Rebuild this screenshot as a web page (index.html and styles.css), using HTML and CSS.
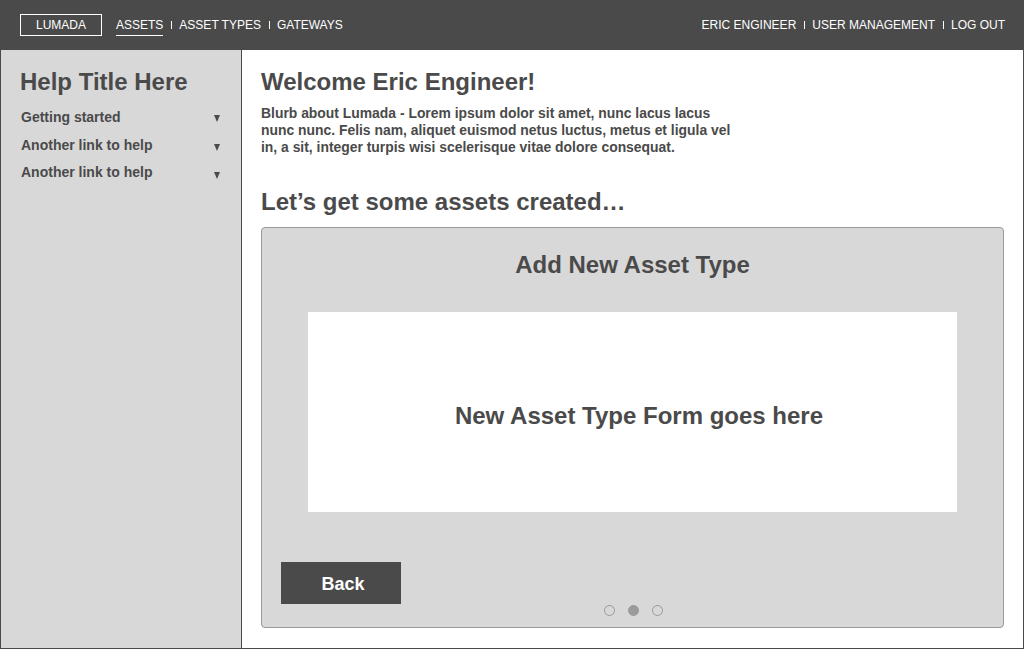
FILE: index.html
```html
<!DOCTYPE html>
<html>
<head>
<meta charset="utf-8">
<link rel="stylesheet" href="styles.css">
</head>
<body>
<div class="app">
  <header class="topbar">
    <div class="brand">LUMADA</div>
    <nav class="nav">
      <a class="nav-link active">ASSETS</a>
      <span class="sep"></span>
      <a class="nav-link">ASSET TYPES</a>
      <span class="sep"></span>
      <a class="nav-link">GATEWAYS</a>
    </nav>
    <nav class="nav nav-right">
      <a class="nav-link">ERIC ENGINEER</a>
      <span class="sep"></span>
      <a class="nav-link">USER MANAGEMENT</a>
      <span class="sep"></span>
      <a class="nav-link">LOG OUT</a>
    </nav>
  </header>
  <div class="body">
    <aside class="sidebar">
      <h2 class="help-title">Help Title Here</h2>
      <ul class="help-list">
        <li class="help-item"><span>Getting started</span><i class="caret"></i></li>
        <li class="help-item"><span>Another link to help</span><i class="caret low"></i></li>
        <li class="help-item"><span>Another link to help</span><i class="caret low"></i></li>
      </ul>
    </aside>
    <main class="content">
      <h1 class="welcome">Welcome Eric Engineer!</h1>
      <p class="blurb">Blurb about Lumada - Lorem ipsum dolor sit amet, nunc lacus lacus nunc nunc. Felis nam, aliquet euismod netus luctus, metus et ligula vel in, a sit, integer turpis wisi scelerisque vitae dolore consequat.</p>
      <h2 class="subhead">Let’s get some assets created…</h2>
      <section class="card">
        <h3 class="card-title">Add New Asset Type</h3>
        <div class="form-box">New Asset Type Form goes here</div>
        <div class="card-footer">
          <button class="back-btn">Back</button>
          <div class="dots">
            <span class="dot"></span>
            <span class="dot on"></span>
            <span class="dot"></span>
          </div>
          <div></div>
        </div>
      </section>
    </main>
  </div>
</div>
</body>
</html>
```

FILE: styles.css
```css
* { box-sizing: border-box; }
html, body { margin: 0; padding: 0; background: #fff; }
body { font-family: "Liberation Sans", Arial, sans-serif; color: #4a4a4a; }

.app {
  width: 1024px;
  height: 649px;
  display: flex;
  flex-direction: column;
}

.topbar {
  height: 50px;
  flex: none;
  background: #4a4a4a;
  color: #fff;
  display: flex;
  align-items: center;
  padding: 0 19px 0 20px;
  font-size: 12px;
}

.brand {
  width: 82px;
  height: 22px;
  border: 1px solid #fff;
  display: flex;
  align-items: center;
  justify-content: center;
  line-height: 14px;
}

.nav {
  display: flex;
  align-items: center;
  margin-left: 14px;
}
.nav-right { margin-left: auto; }

.nav-link {
  line-height: 14px;
  padding: 3px 0;
  border-bottom: 1px solid transparent;
  color: #fff;
}
.nav-link.active { border-bottom-color: #fff; }

.sep {
  width: 1px;
  height: 8px;
  background: #fff;
  margin: 0 7px 0 8px;
}

.body {
  flex: 1;
  display: flex;
  border-left: 1px solid #4a4a4a;
  border-right: 1px solid #4a4a4a;
  border-bottom: 1px solid #4a4a4a;
  min-height: 0;
}

.sidebar {
  width: 241px;
  flex: none;
  background: #d8d8d8;
  border-right: 1px solid #4a4a4a;
  padding: 18px 21px 0 19px;
}

.help-title {
  margin: 0;
  font-size: 24px;
  line-height: 28px;
  font-weight: bold;
}

.help-list {
  list-style: none;
  margin: 8px 0 0 1px;
  padding: 0;
}

.help-item {
  display: flex;
  justify-content: space-between;
  align-items: center;
  font-size: 14px;
  font-weight: bold;
  line-height: 17px;
  height: 27.5px;
}

.caret {
  width: 0;
  height: 0;
  border-left: 3.5px solid transparent;
  border-right: 3.5px solid transparent;
  border-top: 7px solid #4a4a4a;
  margin-top: 2px;
}
.caret.low { margin-top: 5px; }

.content {
  flex: 1;
  padding: 18px 19px 20px 19px;
  display: flex;
  flex-direction: column;
}

.welcome {
  margin: 0;
  font-size: 24px;
  line-height: 28px;
  font-weight: bold;
}

.blurb {
  margin: 9px 0 0;
  width: 480px;
  font-size: 13.9px;
  line-height: 17px;
  font-weight: bold;
}

.subhead {
  margin: 32px 0 0;
  font-size: 24px;
  line-height: 28px;
  font-weight: bold;
}

.card {
  margin-top: 11px;
  flex: 1;
  background: #d8d8d8;
  border: 1px solid #999;
  border-radius: 4px;
  display: flex;
  flex-direction: column;
  padding: 23px 46px 0 46px;
}

.card-title {
  margin: 0;
  text-align: center;
  font-size: 24px;
  line-height: 28px;
  font-weight: bold;
}

.form-box {
  margin-top: 33px;
  height: 200px;
  background: #fff;
  display: flex;
  align-items: center;
  justify-content: center;
  padding: 8px 0 0 13px;
  font-size: 24px;
  font-weight: bold;
}

.card-footer {
  margin: 50px -27px 0 -27px;
  display: grid;
  grid-template-columns: 1fr auto 1fr;
  align-items: end;
}

.back-btn {
  justify-self: start;
  width: 120px;
  height: 42px;
  background: #4a4a4a;
  color: #fff;
  border: none;
  border-radius: 0;
  font-family: "Liberation Sans", Arial, sans-serif;
  font-size: 18px;
  font-weight: bold;
  margin-bottom: 12px;
  padding: 2px 0 0 4px;
}

.dots {
  display: flex;
  gap: 13px;
  margin-left: 1px;
}

.dot {
  width: 11px;
  height: 11px;
  border-radius: 50%;
  border: 1px solid #999;
  background: #d8d8d8;
}
.dot.on { background: #9b9b9b; }
```
